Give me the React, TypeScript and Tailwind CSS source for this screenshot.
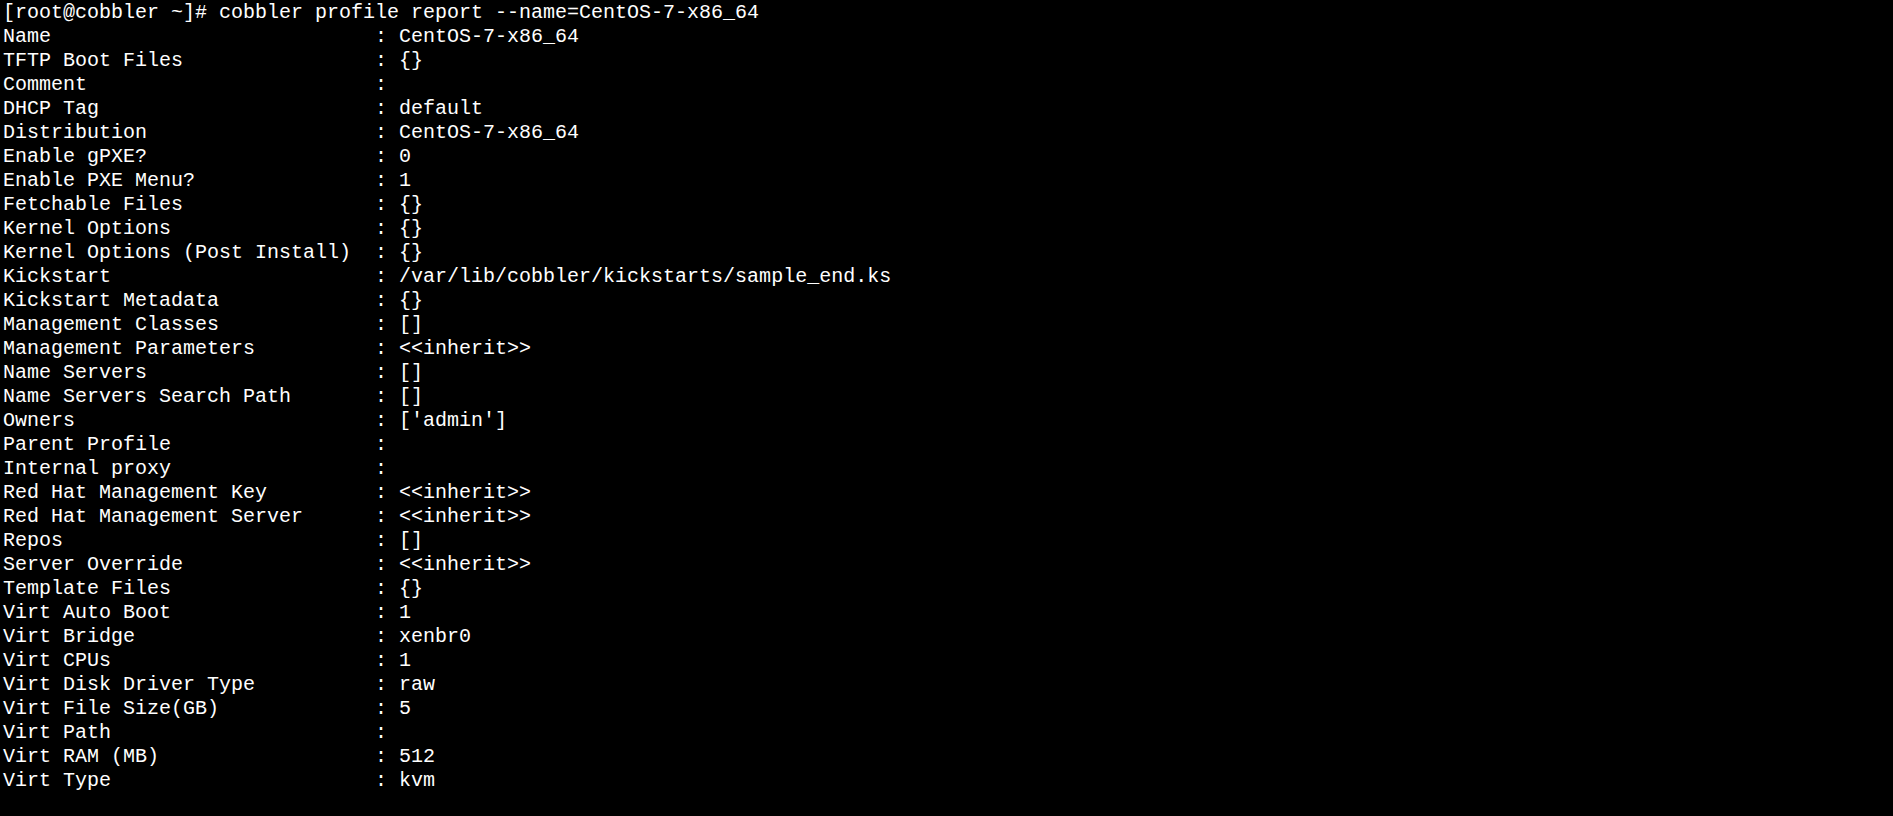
const prompt = "[root@cobbler ~]# cobbler profile report --name=CentOS-7-x86_64";

const rows: [string, string][] = [
  ["Name", "CentOS-7-x86_64"],
  ["TFTP Boot Files", "{}"],
  ["Comment", ""],
  ["DHCP Tag", "default"],
  ["Distribution", "CentOS-7-x86_64"],
  ["Enable gPXE?", "0"],
  ["Enable PXE Menu?", "1"],
  ["Fetchable Files", "{}"],
  ["Kernel Options", "{}"],
  ["Kernel Options (Post Install)", "{}"],
  ["Kickstart", "/var/lib/cobbler/kickstarts/sample_end.ks"],
  ["Kickstart Metadata", "{}"],
  ["Management Classes", "[]"],
  ["Management Parameters", "<<inherit>>"],
  ["Name Servers", "[]"],
  ["Name Servers Search Path", "[]"],
  ["Owners", "['admin']"],
  ["Parent Profile", ""],
  ["Internal proxy", ""],
  ["Red Hat Management Key", "<<inherit>>"],
  ["Red Hat Management Server", "<<inherit>>"],
  ["Repos", "[]"],
  ["Server Override", "<<inherit>>"],
  ["Template Files", "{}"],
  ["Virt Auto Boot", "1"],
  ["Virt Bridge", "xenbr0"],
  ["Virt CPUs", "1"],
  ["Virt Disk Driver Type", "raw"],
  ["Virt File Size(GB)", "5"],
  ["Virt Path", ""],
  ["Virt RAM (MB)", "512"],
  ["Virt Type", "kvm"],
];

export default function App() {
  return (
    <div className="w-[1893px] h-[816px] bg-black text-white overflow-hidden px-[3px] pt-[1px] font-['Liberation_Mono',monospace] text-[20px] leading-[24px] whitespace-pre">
      <div>{prompt}</div>
      {rows.map(([k, v]) => (
        <div key={k}>{`${k.padEnd(30)} : ${v}`}</div>
      ))}
    </div>
  );
}
